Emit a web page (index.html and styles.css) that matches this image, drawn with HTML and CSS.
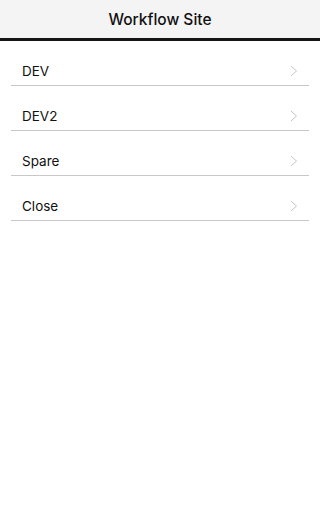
FILE: index.html
```html
<!DOCTYPE html>
<html>
<head>
<meta charset="utf-8">
<link rel="stylesheet" href="styles.css">
</head>
<body>
<div class="header">
  <div class="title">Workflow Site</div>
</div>
<ul class="list">
  <li class="item"><span class="label">DEV</span><svg class="chev" width="8" height="12" viewBox="0 0 8 12"><path d="M1 1 L6.5 6 L1 11" fill="none" stroke="#c4c4c4" stroke-width="1"/></svg></li>
  <li class="item"><span class="label">DEV2</span><svg class="chev" width="8" height="12" viewBox="0 0 8 12"><path d="M1 1 L6.5 6 L1 11" fill="none" stroke="#c4c4c4" stroke-width="1"/></svg></li>
  <li class="item"><span class="label">Spare</span><svg class="chev" width="8" height="12" viewBox="0 0 8 12"><path d="M1 1 L6.5 6 L1 11" fill="none" stroke="#c4c4c4" stroke-width="1"/></svg></li>
  <li class="item"><span class="label">Close</span><svg class="chev" width="8" height="12" viewBox="0 0 8 12"><path d="M1 1 L6.5 6 L1 11" fill="none" stroke="#c4c4c4" stroke-width="1"/></svg></li>
</ul>
</body>
</html>
```
FILE: styles.css
```css
html, body {
  margin: 0;
  padding: 0;
  background: #ffffff;
  font-family: Inter, "Liberation Sans", sans-serif;
  color: #111111;
}
.header {
  height: 38px;
  background: #f4f4f4;
  border-bottom: 3px solid #151515;
  display: flex;
  align-items: center;
  justify-content: center;
}
.title {
  font-size: 15.5px;
  font-weight: 500;
  color: #111;
}
.list {
  list-style: none;
  margin: 0;
  padding: 0 11px;
}
.item {
  height: 44px;
  border-bottom: 1px solid #c8c8c8;
  display: flex;
  align-items: flex-end;
  justify-content: space-between;
  padding: 0 11px 6px 11px;
  box-sizing: border-box;
  height: 45px;
}
.label {
  font-size: 13.5px;
  line-height: 16px;
}
.chev {
  margin-bottom: 2px;
}
```
